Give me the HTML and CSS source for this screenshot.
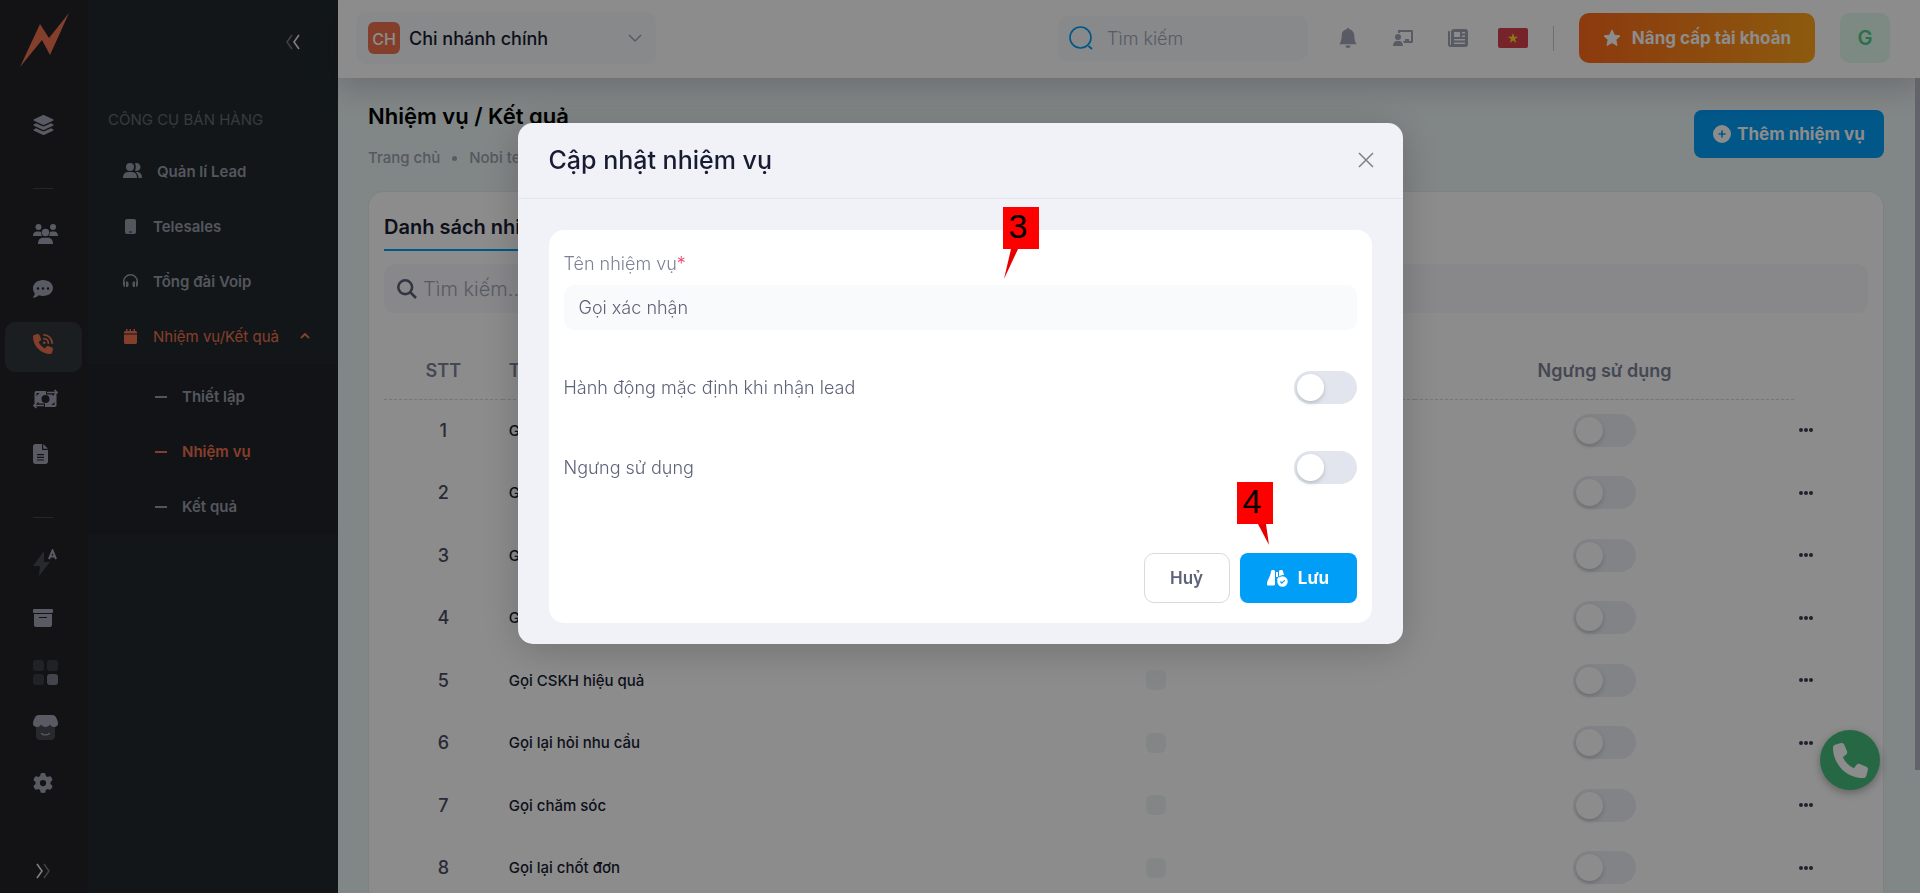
FILE: index.html
```html
<!DOCTYPE html>
<html lang="vi">
<head>
    <meta charset="UTF-8">
    <meta name="viewport" content="width=device-width, initial-scale=1.0">
    <title>Nhiệm vụ / Kết quả</title>
    <link rel="stylesheet" href="styles.css">
</head>
<body>
    <div class="app">
        <nav class="rail">
            <a href="#" class="logo" aria-label="Trang chủ">
                <svg width="50" height="56" viewBox="0 0 50 56"><path fill="#f07350" d="M0 55 20 12l9 14L49 1 30 43l-8-15z"/></svg>
            </a>
            <a href="#" class="rail-item" aria-label="Tổng quan">
                <svg width="21" height="20" viewBox="32 0 512 512"><path d="M264.500 5.200c14.900-6.900 32.100-6.900 47 0l218.600 101c8.500 3.900 13.900 12.400 13.900 21.800s-5.400 17.900-13.900 21.800l-218.600 101c-14.900 6.900-32.100 6.900-47 0L45.900 149.800C37.400 145.800 32 137.300 32 128s5.400-17.900 13.900-21.800L264.500 5.200zM476.900 209.600l53.200 24.600c8.500 3.900 13.900 12.400 13.900 21.800s-5.400 17.900-13.900 21.800l-218.600 101c-14.900 6.900-32.100 6.900-47 0L45.900 277.800C37.400 273.800 32 265.300 32 256s5.400-17.900 13.900-21.800l53.200-24.600 152 70.200c23.400 10.800 50.400 10.800 73.800 0l152-70.200zm-152 198.200l152-70.200 53.200 24.600c8.500 3.900 13.900 12.400 13.900 21.800s-5.400 17.900-13.900 21.800l-218.600 101c-14.900 6.900-32.100 6.900-47 0L45.900 405.800C37.400 401.800 32 393.300 32 384s5.400-17.900 13.900-21.800l53.200-24.600 152 70.200c23.400 10.800 50.400 10.800 73.800 0z"/></svg>
            </a>
            <hr>
            <a href="#" class="rail-item" aria-label="Khách hàng">
                <svg width="25" height="20" viewBox="0 0 25 20"><circle cx="5.500" cy="3" r="3"/><circle cx="20" cy="3" r="3"/><circle cx="12.500" cy="8.500" r="3.700"/><path d="M0 12c0-3 1.500-4.500 4-4.500h2c1 0 1.600.2 2.200.6-.2 1.700.2 3 1 3.900zM25 12c0-3-1.500-4.500-4-4.500h-2c-1 0-1.600.2-2.200.6.2 1.700-.2 3-1 3.900zM5 20c0-4 2-6.200 5-6.200h5c3 0 5 2.200 5 6.200z"/></svg>
            </a>
            <a href="#" class="rail-item" aria-label="Tin nhắn">
                <svg width="20" height="18" viewBox="0 0 20 18"><path fill-rule="evenodd" d="M10 0c5.500 0 10 3.600 10 8s-4.500 8-10 8c-1.500 0-2.900-.2-4.200-.7C4.500 16.400 2.600 17.800.3 17.800c-.4 0-.5-.4-.2-.7.900-1 1.600-2.300 1.700-3.600C.6 12 0 10.100 0 8c0-4.400 4.500-8 10-8zM5 7.200a1.300 1.300 0 1 0 0 2.600 1.300 1.300 0 0 0 0-2.600zm5 0a1.300 1.300 0 1 0 0 2.600 1.300 1.300 0 0 0 0-2.600zm5 0a1.300 1.300 0 1 0 0 2.600 1.300 1.300 0 0 0 0-2.600z"/></svg>
            </a>
            <a href="#" class="rail-item active" aria-label="Công cụ bán hàng">
                <svg width="20" height="20" viewBox="0 0 512 512"><path d="M164.900 24.600c-7.700-18.600-28-28.500-47.400-23.200l-88 24C12.100 30.200 0 46 0 64C0 311.400 200.600 512 448 512c18 0 33.800-12.100 38.600-29.500l24-88c5.300-19.400-4.600-39.700-23.200-47.400l-96-40c-16.300-6.800-35.200-2.100-46.300 11.600L304.700 368C234.300 334.700 177.300 277.700 144 207.300L193.300 167c13.700-11.200 18.400-30 11.600-46.300l-40-96z"/><path fill="none" stroke="currentColor" stroke-width="46" stroke-linecap="round" d="M280 24c115 0 208 93 208 208M280 120c62 0 112 50 112 112"/><circle cx="288" cy="224" r="32"/></svg>
            </a>
            <a href="#" class="rail-item" aria-label="Thu chi">
                <svg width="25" height="20" viewBox="0 0 25 20"><path fill-rule="evenodd" d="M3.500 2H13v3.500h6.500V7L22 5.500h1.500V16c0 1.200-.8 2-2 2H12v-3.500H5.500V13L3 14.500H1.500V4c0-1.200.8-2 2-2zm9 4a4 4 0 1 0 0 8 4 4 0 0 0 0-8zM3.500 4v3l3-3zm18 12v-3l-3 3z"/><path fill="none" stroke="currentColor" stroke-width="1.600" d="M14 3.500h10M21.500 1 24 3.500 21.500 6M11 16.500H1M3.500 14 1 16.500 3.500 19"/></svg>
            </a>
            <a href="#" class="rail-item" aria-label="Tài liệu">
                <svg width="15" height="20" viewBox="0 0 15 20"><path fill-rule="evenodd" d="M2.500 0H9v5c0 .7.400 1 1 1h5v11.500c0 1.500-1 2.500-2.500 2.500h-10C1 20 0 19 0 17.500v-15C0 1 1 0 2.500 0zM4 10v1.200h7V10zm0 2.700v1.200h7v-1.200zm0 2.700v1.200h7v-1.200z"/><path d="m10.200 0 4.800 4.800h-4.800z"/></svg>
            </a>
            <hr>
            <a href="#" class="rail-item" aria-label="Tự động">
                <svg width="24" height="27" viewBox="0 0 24 27"><path opacity=".3" d="M11 2 0 17h7L6 27l11-14h-6z"/><path fill="none" stroke="currentColor" stroke-width="2" d="m16 10 3.500-8.500L23 10M17.500 7.500h4"/></svg>
            </a>
            <a href="#" class="rail-item" aria-label="Kho">
                <svg width="20" height="18" viewBox="0 0 20 18"><rect width="20" height="4" rx="1"/><path fill-rule="evenodd" d="M1 5h18v11c0 1.200-.8 2-2 2H3c-1.200 0-2-.8-2-2zm5 3v1h8V8z"/></svg>
            </a>
            <a href="#" class="rail-item" aria-label="Ứng dụng">
                <svg width="25" height="25" viewBox="0 0 25 25"><g opacity=".2"><rect width="11" height="11" rx="3"/><rect x="14" width="11" height="11" rx="3"/><rect y="14" width="11" height="11" rx="3"/></g><rect x="14" y="14" width="11" height="11" rx="3" opacity=".7"/></svg>
            </a>
            <a href="#" class="rail-item" aria-label="Cửa hàng">
                <svg width="25" height="25" viewBox="0 0 25 25"><path opacity=".3" d="M3 8h19v13c0 2.500-1.500 4-4 4H7c-2.500 0-4-1.500-4-4z"/><path d="M6 0h13c3 0 4 2 5 4.500.7 1.500 1 2.500 1 4 0 2-1.500 3.500-4 3.500-2 0-3.300-1-4-2.500-.8 1.500-2.500 2.500-4.500 2.500S8.800 11 8 9.500C7.300 11 6 12 4 12c-2.500 0-4-1.500-4-3.500 0-1.500.3-2.500 1-4C2 2 3 0 6 0z"/><path fill="none" stroke="currentColor" stroke-width="1.300" stroke-linecap="round" d="M8.500 18.500c2 1.800 6 1.800 8 0"/></svg>
            </a>
            <a href="#" class="rail-item" aria-label="Cài đặt">
                <svg width="20" height="20" viewBox="0 0 512 512"><path d="M495.900 166.600c3.200 8.700 .5 18.400-6.400 24.600l-43.300 39.400c1.100 8.300 1.700 16.800 1.700 25.400s-.6 17.100-1.700 25.400l43.300 39.400c6.900 6.200 9.600 15.900 6.400 24.600c-4.400 11.900-9.700 23.300-15.800 34.300l-4.700 8.100c-6.600 11-14 21.400-22.100 31.200c-5.900 7.200-15.700 9.600-24.500 6.800l-55.700-17.700c-13.400 10.300-28.200 18.900-44 25.400l-12.500 57.100c-2 9.100-9 16.300-18.200 17.800c-13.800 2.300-28 3.500-42.500 3.500s-28.700-1.200-42.500-3.500c-9.200-1.500-16.200-8.700-18.200-17.800l-12.500-57.100c-15.800-6.500-30.600-15.100-44-25.400L83.100 425.900c-8.800 2.800-18.600 .3-24.500-6.800c-8.100-9.800-15.500-20.200-22.100-31.200l-4.700-8.100c-6.100-11-11.400-22.400-15.800-34.300c-3.200-8.700-.5-18.400 6.400-24.600l43.300-39.400C64.600 273.100 64 264.600 64 256s.6-17.100 1.700-25.400L22.400 191.200c-6.900-6.200-9.600-15.900-6.400-24.600c4.400-11.900 9.700-23.300 15.800-34.300l4.700-8.100c6.600-11 14-21.400 22.100-31.200c5.900-7.200 15.700-9.600 24.500-6.800l55.700 17.700c13.400-10.300 28.200-18.900 44-25.400l12.500-57.100c2-9.100 9-16.300 18.200-17.800C227.300 1.200 241.500 0 256 0s28.700 1.200 42.500 3.500c9.200 1.500 16.200 8.700 18.200 17.800l12.500 57.100c15.800 6.500 30.600 15.100 44 25.400l55.700-17.700c8.800-2.800 18.600-.3 24.500 6.800c8.100 9.800 15.500 20.200 22.100 31.200l4.700 8.100c6.100 11 11.400 22.400 15.800 34.300zM256 336a80 80 0 1 0 0-160 80 80 0 1 0 0 160z"/></svg>
            </a>
            <button type="button" class="rail-expand" aria-label="Mở rộng">
                <svg width="16" height="16" viewBox="0 0 16 16" fill="none" stroke="#e8e8ec" stroke-width="1.600"><path d="m2 1 5 7-5 7"/><path opacity=".4" d="m9 1 5 7-5 7"/></svg>
            </button>
        </nav>

        <aside class="panel">
            <div class="panel-top">
                <button type="button" aria-label="Thu gọn">
                    <svg width="16" height="16" viewBox="0 0 16 16" fill="none" stroke="#e8e8ec" stroke-width="1.600"><path opacity=".4" d="M7 1 2 8l5 7"/><path d="m14 1-5 7 5 7"/></svg>
                </button>
            </div>
            <h2>CÔNG CỤ BÁN HÀNG</h2>
            <a href="#" class="panel-link">
                <svg width="19" height="16" viewBox="0 0 19 16"><circle cx="7" cy="4" r="4"/><path d="M0 15c0-4 2-6 5.500-6h3c3.500 0 5.500 2 5.500 6z"/><path d="M12 .3a4 4 0 1 1 0 7.400c1-2.300 1-5 0-7.400zM12.500 9H14c3 0 5 2 5 6h-3.500c0-2.500-1-4.500-3-6z"/></svg>
                <span>Quản lí Lead</span>
            </a>
            <a href="#" class="panel-link">
                <svg width="15" height="15" viewBox="0 0 15 15"><path fill-rule="evenodd" d="M4 0h7c1.200 0 2 .8 2 2v11c0 1.200-.8 2-2 2H4c-1.200 0-2-.8-2-2V2c0-1.200.8-2 2-2zm2 12.500v1h3v-1z"/></svg>
                <span>Telesales</span>
            </a>
            <a href="#" class="panel-link">
                <svg width="15" height="14" viewBox="0 0 15 14"><path fill="none" stroke="currentColor" stroke-width="1.400" d="M.7 10V7.500a6.800 6.800 0 0 1 13.600 0V10"/><path d="M0 10c0-1.500 1-2.500 2-2.500V13c-1 0-2-1-2-3zM3 7.500h1c.8 0 1.500.7 1.500 1.500v2.500c0 .8-.7 1.500-1.500 1.500H3zM12 7.500h-1c-.8 0-1.500.7-1.500 1.500v2.500c0 .8.700 1.500 1.500 1.500h1zM15 10c0-1.500-1-2.500-2-2.500V13c1 0 2-1 2-3z"/></svg>
                <span>Tổng đài Voip</span>
            </a>
            <a href="#" class="panel-link open">
                <svg width="15" height="15" viewBox="0 0 15 15"><path d="M1 3.500C1 2.500 1.700 2 2.500 2H3V0h1.500v2h2V0H8v2h2.500V0H12v2h.5c.8 0 1.500.5 1.500 1.500V4.500H1zM1 5.500h13v8c0 .8-.7 1.500-1.500 1.500h-10C1.700 15 1 14.300 1 13.500z"/></svg>
                <span>Nhiệm vụ/Kết quả</span>
                <svg class="caret" width="10" height="6" viewBox="0 0 10 6" fill="none"><path stroke="currentColor" stroke-width="2" d="m1 5 4-4 4 4"/></svg>
            </a>
            <div class="submenu">
                <a href="#">Thiết lập</a>
                <a href="#" class="active">Nhiệm vụ</a>
                <a href="#">Kết quả</a>
            </div>
        </aside>

        <div class="content">
            <header class="topbar">
                <button type="button" class="branch">
                    <span class="branch-badge">CH</span>
                    <span class="branch-name">Chi nhánh chính</span>
                    <svg width="14" height="9" viewBox="0 0 14 9" fill="none" stroke="#a1a5b0" stroke-width="1.500"><path d="m1 1 6 6 6-6"/></svg>
                </button>
                <label class="top-search">
                    <svg width="24" height="24" viewBox="0 0 24 24" fill="none" stroke="#009ef7"><circle cx="11.500" cy="11.500" r="10.500" stroke-width="1.600"/><path stroke-width="2" d="m19.500 20 3.500 3"/></svg>
                    <input type="search" placeholder="Tìm kiếm" aria-label="Tìm kiếm">
                </label>
                <div class="top-icons">
                    <a href="#" aria-label="Thông báo">
                        <svg width="20" height="20" viewBox="0 0 16 16"><path d="M8 16a2 2 0 0 0 2-2H6a2 2 0 0 0 2 2m.995-14.901a1 1 0 1 0-1.990 0A5 5 0 0 0 3 6c0 1.098-.5 6-2 7h14c-1.500-1-2-5.902-2-7 0-2.420-1.720-4.440-4.005-4.901"/></svg>
                    </a>
                    <a href="#" aria-label="Hướng dẫn">
                        <svg width="20" height="16" viewBox="0 0 20 16"><circle cx="5" cy="7" r="3"/><path d="M0 16c0-3 1.500-5 4-5h2c2.500 0 4 2 4 5z"/><path d="M5 0h13.500c.9 0 1.500.6 1.500 1.500v10c0 .9-.6 1.500-1.500 1.500H11l-1-2h2V9h4v2h2V2H7v1H5z"/></svg>
                    </a>
                    <a href="#" aria-label="Tin tức">
                        <svg width="20" height="18" viewBox="0 0 20 18"><path fill-rule="evenodd" d="M6.500 0h11C19 0 20 1 20 2.500v13c0 1.500-1 2.500-2.500 2.500h-15C1 18 0 17 0 15.500V3c0-.6.4-1 1-1s1 .4 1 1v12.500c0 .3.200.5.500.5s.5-.2.500-.5v-13C3 1 4.500 0 6.500 0zM6 3v5h6V3zm8 0v1.500h3V3zm0 3.500V8h3V6.500zM6 10v1.500h11V10zm0 3.500V15h11v-1.500z"/></svg>
                    </a>
                    <a href="#" aria-label="Tiếng Việt">
                        <svg width="30" height="20" viewBox="0 0 30 20"><rect width="30" height="20" rx="2" fill="#d8414b"/><path fill="#ffda2c" d="m15 5 1.300 3.700h4L17 11l1.200 4-3.200-2.400-3.200 2.400L13 11 9.700 8.700h4z"/></svg>
                    </a>
                </div>
                <button type="button" class="upgrade">
                    <svg width="18" height="18" viewBox="0 0 18 18"><path fill="#fff" stroke="#fff" stroke-linejoin="round" d="m9 1 2.400 5.200 5.600.7-4.200 3.800 1.200 5.800-5-2.900-5 2.900 1.200-5.800L1 6.900l5.600-.7z"/></svg>
                    Nâng cấp tài khoản
                </button>
                <a href="#" class="avatar">G</a>
            </header>

            <main class="page">
                <div class="page-head">
                    <div>
                        <h1>Nhiệm vụ / Kết quả</h1>
                        <div class="breadcrumb"><a href="#">Trang chủ</a><i></i><a href="#">Nobi tele</a></div>
                    </div>
                    <button type="button" class="btn-primary add">
                        <svg width="18" height="18" viewBox="0 0 18 18"><path fill="#fff" fill-rule="evenodd" d="M9 0a9 9 0 1 0 0 18A9 9 0 0 0 9 0zM8.200 5.500h1.600v2.700h2.700v1.600H9.800v2.700H8.200V9.800H5.500V8.200h2.700z"/></svg>
                        Thêm nhiệm vụ
                    </button>
                </div>

                <section class="card">
                    <a href="#" class="tab">Danh sách nhiệm vụ</a>
                    <label class="list-search">
                        <svg width="20" height="20" viewBox="0 0 20 20" fill="none" stroke="#5e6278" stroke-width="2.600"><circle cx="8.200" cy="8.200" r="6.900"/><path d="m13 13 6 6"/></svg>
                        <input type="search" placeholder="Tìm kiếm..." aria-label="Tìm kiếm nhiệm vụ">
                    </label>
                    <table>
                        <thead>
                            <tr>
                                <th class="c-no">STT</th>
                                <th class="c-name">Tên nhiệm vụ</th>
                                <th class="c-default">Mặc định</th>
                                <th class="c-stop">Ngưng sử dụng</th>
                                <td class="c-menu"></td>
                            </tr>
                        </thead>
                        <tbody id="task-rows"></tbody>
                    </table>
                </section>
            </main>
        </div>
    </div>

    <div class="scroll-thumb"></div>
    <button type="button" class="call-fab" aria-label="Gọi">
        <svg width="35" height="35" viewBox="0 0 512 512"><path fill="#fff" d="M164.900 24.600c-7.700-18.600-28-28.500-47.400-23.200l-88 24C12.100 30.200 0 46 0 64C0 311.400 200.600 512 448 512c18 0 33.800-12.100 38.600-29.500l24-88c5.300-19.400-4.600-39.700-23.200-47.400l-96-40c-16.300-6.800-35.200-2.100-46.300 11.600L304.700 368C234.300 334.700 177.300 277.700 144 207.300L193.300 167c13.700-11.200 18.400-30 11.600-46.300l-40-96z"/></svg>
    </button>

    <div class="backdrop">
        <div class="modal" role="dialog" aria-labelledby="modal-title">
            <div class="modal-head">
                <h3 id="modal-title">Cập nhật nhiệm vụ</h3>
                <button type="button" aria-label="Đóng">
                    <svg width="16" height="16" viewBox="0 0 16 16" stroke="#7f8088" stroke-width="1.500"><path d="m1 1 14 14M15 1 1 15"/></svg>
                </button>
            </div>
            <form class="modal-form">
                <label class="field-label" for="task-name">Tên nhiệm vụ<span>*</span></label>
                <input type="text" id="task-name" class="field" value="Gọi xác nhận">
                <div class="switch-row">
                    <label for="default-action">Hành động mặc định khi nhận lead</label>
                    <input type="checkbox" id="default-action" class="switch">
                </div>
                <div class="switch-row">
                    <label for="stop-using">Ngưng sử dụng</label>
                    <input type="checkbox" id="stop-using" class="switch">
                </div>
                <div class="actions">
                    <button type="button" class="btn-cancel">Huỷ</button>
                    <button type="submit" class="btn-primary save">
                        <svg width="21" height="17" viewBox="0 0 21 17"><path fill="#fff" d="M4 1.500C4 .7 4.600 0 5.500 0h1C7.400 0 8 .7 8 1.500V14c0 1-.7 1.500-1.500 1.500h-5C.5 15.500 0 15 0 14c.1-4 3.500-7.500 4-12.500zM9 2h2v5H9zM12 1.500c0-.8.600-1.500 1.500-1.500h1c.9 0 1.500.7 1.500 1.500l1 3.500c-3.500-.2-6.500 2-7 5.500l2-1z"/><circle cx="15.500" cy="11.500" r="5.200" fill="#fff"/><path fill="none" stroke="#009ef7" stroke-width="1.200" d="m13.300 11.500 1.600 1.600 2.900-3"/></svg>
                        Lưu
                    </button>
                </div>
            </form>

            <div class="callout callout-name">3
                <svg width="14" height="30" viewBox="0 0 14 30"><path fill="#e60000" d="M7 0h7L0 30z"/></svg>
            </div>
            <div class="callout callout-save">4
                <svg width="11" height="21" viewBox="0 0 11 21"><path fill="#e60000" d="M0 0h8l3 21z"/></svg>
            </div>
        </div>
    </div>

    <script>
        const tasks = [
            'Gọi xác nhận',
            'Gọi tư vấn',
            'Gọi báo giá',
            'Gọi nhắc lịch',
            'Gọi CSKH hiệu quả',
            'Gọi lại hỏi nhu cầu',
            'Gọi chăm sóc',
            'Gọi lại chốt đơn'
        ];

        document.getElementById('task-rows').innerHTML = tasks.map((name, i) => `
            <tr>
                <td class="c-no">${i + 1}</td>
                <td class="c-name">${name}</td>
                <td class="c-default"><input type="checkbox" class="tick" aria-label="Mặc định"></td>
                <td class="c-stop"><input type="checkbox" class="switch" aria-label="Ngưng sử dụng"></td>
                <td class="c-menu"><button type="button" aria-label="Tuỳ chọn"><i></i><i></i><i></i></button></td>
            </tr>`).join('');
    </script>
</body>
</html>
```

FILE: styles.css
```css
* {
    box-sizing: border-box;
}
body {
    margin: 0;
    height: 100vh;
    overflow: hidden;
    font-family: Inter, "Noto Sans", sans-serif;
    font-size: 16px;
    color: #181c32;
    background-color: #ecf4f4;
}
a {
    color: inherit;
    text-decoration: none;
}
button {
    font: inherit;
    border: none;
    background: none;
    padding: 0;
    cursor: pointer;
}
input {
    font: inherit;
    color: inherit;
    border: none;
    outline: none;
    margin: 0;
}
svg {
    display: block;
    flex-shrink: 0;
    fill: currentColor;
}
svg[fill="none"] {
    fill: none;
}
.app {
    display: flex;
    height: 100vh;
}

/* Icon rail */
.rail {
    width: 88px;
    flex-shrink: 0;
    display: flex;
    flex-direction: column;
    background-color: #232429;
    color: #a3a5b4;
    padding: 12px 5px 14px;
}
.logo {
    height: 91px;
    padding-left: 15px;
}
.rail-item {
    display: flex;
    align-items: center;
    flex-shrink: 0;
    height: 50px;
    margin-bottom: 5px;
    padding: 0 0 7px 28px;
    width: 77px;
    border-radius: 10px;
}
.rail-item.active {
    background-color: #31383b;
    color: #f07350;
}
.rail hr {
    width: 20px;
    height: 1px;
    flex-shrink: 0;
    border: none;
    background-color: #44464d;
    margin: 30px 0 23px 28px;
}
.rail-expand {
    margin: auto 0 0 30px;
    width: 16px;
}

/* Section menu */
.panel {
    width: 250px;
    flex-shrink: 0;
    background-color: #21292c;
    color: #9a9dab;
    font-size: 15px;
    font-weight: 600;
}
.panel-top {
    display: flex;
    justify-content: flex-end;
    height: 108px;
    padding: 34px 37px 0 0;
}
.panel-top button {
    height: 16px;
}
.panel h2 {
    margin: 0 0 23px 20px;
    font-size: 15px;
    font-weight: 400;
    line-height: 24px;
    color: #646b76;
    white-space: nowrap;
}
.panel-link {
    display: flex;
    align-items: center;
    height: 32px;
    margin-bottom: 23px;
    padding-left: 35px;
    gap: 15px;
    white-space: nowrap;
}
.panel-link.open {
    margin-bottom: 12px;
    color: #f07350;
    font-weight: 400;
}
.caret {
    margin-left: 6px;
}
.submenu {
    background-color: #222429;
    padding-top: 5px;
}
.submenu a {
    display: flex;
    align-items: center;
    height: 55px;
    padding-left: 67px;
    gap: 15px;
}
.submenu a::before {
    content: "";
    width: 12px;
    height: 2px;
    background-color: currentColor;
}
.submenu .active {
    color: #f07350;
}

/* Header */
.content {
    flex: 1;
    min-width: 0;
    display: flex;
    flex-direction: column;
}
.topbar {
    position: relative;
    height: 78px;
    flex-shrink: 0;
    display: flex;
    align-items: center;
    padding: 0 30px 2px 18px;
    background-color: #fff;
    box-shadow: 0 10px 30px rgba(40, 30, 60, .2);
}
.branch {
    display: flex;
    align-items: center;
    width: 300px;
    height: 52px;
    padding: 0 14px 0 12px;
    border-radius: 10px;
    background-color: #f7fafc;
    color: #181c32;
}
.branch-badge {
    width: 32px;
    height: 32px;
    border-radius: 6px;
    background-color: #f07350;
    color: #fff;
    font-weight: 500;
    line-height: 34px;
}
.branch-name {
    flex: 1;
    padding-left: 9px;
    font-size: 18px;
    font-weight: 500;
    text-align: left;
}
.top-search {
    display: flex;
    align-items: center;
    gap: 14px;
    width: 250px;
    height: 45px;
    margin-left: auto;
    padding-left: 11px;
    border-radius: 10px;
    background-color: #f7fafc;
    font-size: 18px;
}
.top-search input,
.list-search input {
    flex: 1;
    min-width: 0;
    padding: 0;
    background: none;
    font-weight: 300;
}
.top-search input::placeholder,
.list-search input::placeholder {
    color: #a1a5b7;
}
.top-icons {
    display: flex;
    align-items: center;
    gap: 35px;
    height: 25px;
    margin: 0 25px 0 30px;
    padding-right: 25px;
    border-right: 1px solid #c9cbd3;
    color: #a1a5b7;
}
.top-icons a:last-child {
    margin-left: -5px;
}
.upgrade {
    display: flex;
    align-items: center;
    justify-content: center;
    gap: 11px;
    width: 236px;
    height: 50px;
    border-radius: 10px;
    background: linear-gradient(90deg, #ff6a1a, #ffa41a);
    color: #fff;
    font-size: 17px;
    font-weight: 700;
    white-space: nowrap;
}
.avatar {
    width: 50px;
    height: 50px;
    margin-left: 25px;
    border-radius: 10px;
    background-color: #e4faee;
    color: #50cd89;
    font-size: 20px;
    font-weight: 600;
    line-height: 50px;
    text-align: center;
}

/* Page */
.page {
    flex: 1;
    min-height: 0;
    overflow: hidden;
    padding: 23px 36px 0 30px;
}
.page-head {
    display: flex;
    justify-content: space-between;
}
.page-head h1 {
    margin: 0;
    font-size: 22px;
    font-weight: 600;
    line-height: 30px;
    color: #000;
}
.breadcrumb {
    display: flex;
    align-items: center;
    gap: 12px;
    margin-top: 15px;
    color: #9da1ad;
    font-size: 15px;
    font-weight: 500;
    line-height: 24px;
}
.breadcrumb i {
    width: 5px;
    height: 5px;
    border-radius: 50%;
    background-color: #a1a5b7;
}
.btn-primary {
    display: flex;
    align-items: center;
    justify-content: center;
    border-radius: 8px;
    background-color: #009ef7;
    color: #fff;
    font-size: 17px;
    font-weight: 700;
    height: 48px;
}
.add {
    width: 190px;
    margin-top: 9px;
    gap: 6px;
    white-space: nowrap;
}
.card {
    margin-top: 21px;
    padding: 15px 15px 40px;
    border: 1px solid #e6eced;
    border-radius: 15px;
    background-color: #fff;
}
.tab {
    display: inline-block;
    height: 44px;
    border-bottom: 2px solid #009ef7;
    font-size: 20px;
    font-weight: 600;
    line-height: 40px;
}
.list-search {
    display: flex;
    align-items: center;
    gap: 6px;
    height: 49px;
    margin-top: 13px;
    padding-left: 13px;
    border-radius: 10px;
    background-color: #f7f8fb;
    font-size: 20px;
}
table {
    width: 100%;
    margin-top: 30px;
    border-collapse: collapse;
    table-layout: fixed;
}
th {
    height: 56px;
    padding: 0;
    border-bottom: 1px dashed #d6d8e0;
    color: #7e8299;
    font-size: 18px;
    font-weight: 600;
    text-align: center;
}
td {
    height: 62px;
    padding: 0;
    text-align: center;
}
tr:nth-child(even) td {
    height: 63px;
}
thead tr td.c-menu {
    height: 56px;
}
.c-no {
    width: 8%;
}
td.c-no {
    color: #4b4e63;
    font-size: 18px;
    font-weight: 500;
}
.c-name {
    width: 26.5%;
    padding-left: 6px;
    text-align: left;
}
td.c-name {
    font-size: 15px;
    font-weight: 500;
}
.c-default {
    width: 35%;
}
.c-stop {
    width: 25.5%;
}
.c-menu {
    width: 5%;
    padding-left: 5px;
    text-align: left;
}
.c-menu button {
    display: flex;
    gap: 1px;
}
.c-menu i {
    width: 4px;
    height: 4px;
    border-radius: 50%;
    background-color: #3a3d50;
}
.tick {
    appearance: none;
    display: block;
    width: 20px;
    height: 20px;
    margin: 0 auto;
    border-radius: 6px;
    background-color: #eef5f5;
}
.switch {
    appearance: none;
    display: block;
    width: 63px;
    height: 33px;
    padding: 3px;
    border-radius: 17px;
    background-color: #e2e5ee;
    cursor: pointer;
}
.switch::before {
    content: "";
    display: block;
    width: 27px;
    height: 27px;
    border-radius: 50%;
    background-color: #fff;
    box-shadow: 0 2px 4px rgba(0, 35, 11, .2);
}
td .switch {
    margin: 0 auto;
    background-color: #eceef5;
}
.scroll-thumb {
    position: fixed;
    top: 78px;
    right: 0;
    width: 5px;
    height: 692px;
    background-color: #b5b5c3;
}
.call-fab {
    position: fixed;
    right: 40px;
    bottom: 103px;
    width: 60px;
    height: 60px;
    display: flex;
    align-items: center;
    justify-content: center;
    border-radius: 50%;
    background-color: #47be7d;
    box-shadow: 0 3px 8px rgba(0, 0, 0, .3);
}

/* Dialog */
.backdrop {
    position: fixed;
    inset: 0;
    display: flex;
    justify-content: center;
    align-items: flex-start;
    padding-top: 123px;
    background-color: rgba(0, 0, 0, .45);
}
.modal {
    position: relative;
    width: 885px;
    max-width: 95%;
    border-radius: 15px;
    background-color: #f1f2f7;
    box-shadow: 0 6px 40px rgba(0, 0, 0, .2);
}
.modal-head {
    display: flex;
    align-items: center;
    justify-content: space-between;
    height: 76px;
    padding: 0 29px 2px 31px;
    border-bottom: 1px solid #e4e6ed;
}
.modal-head h3 {
    margin: 0;
    font-size: 25px;
    font-weight: 500;
}
.modal-form {
    margin: 31px 31px 21px;
    padding: 20px 15px;
    border-radius: 15px;
    background-color: #fff;
    color: #5e6278;
    font-size: 18px;
}
.modal-form label {
    font-weight: 300;
    line-height: 28px;
}
.field-label {
    display: block;
    color: #7e8299;
}
.field-label span {
    color: #f1416c;
}
.field {
    display: block;
    width: 100%;
    height: 45px;
    margin: 7px 0 41px;
    padding: 0 15px 1px;
    border-radius: 10px;
    background-color: #f9fafc;
    font-weight: 300;
}
.switch-row {
    display: flex;
    align-items: center;
    justify-content: space-between;
    height: 33px;
    margin-bottom: 47px;
}
.actions {
    display: flex;
    justify-content: flex-end;
    gap: 10px;
    margin-top: 69px;
}
.btn-cancel {
    width: 86px;
    height: 50px;
    border: 1px solid #d9d9de;
    border-radius: 10px;
    background-color: #fff;
    color: #5e6278;
    font-size: 17px;
    font-weight: 600;
}
.save {
    width: 117px;
    height: 50px;
    gap: 10px;
}

/* Step markers over the dialog */
.callout {
    position: absolute;
    width: 36px;
    height: 42px;
    padding-left: 6px;
    background-color: #f00;
    color: #000;
    font-family: "Liberation Sans", Arial, sans-serif;
    font-size: 34px;
    line-height: 38px;
}
.callout svg {
    position: absolute;
    top: 100%;
}
.callout-name {
    top: 84px;
    left: 485px;
}
.callout-name svg {
    left: 1px;
}
.callout-save {
    top: 359px;
    left: 719px;
}
.callout-save svg {
    left: 21px;
}
```
